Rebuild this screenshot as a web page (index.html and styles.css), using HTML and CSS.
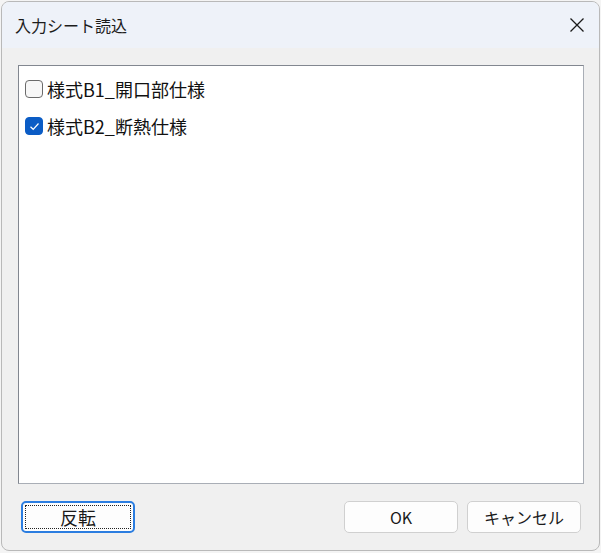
FILE: index.html
```html
<!DOCTYPE html>
<html lang="ja">
<head>
    <meta charset="UTF-8">
    <title>入力シート読込</title>
    <link rel="stylesheet" href="styles.css">
</head>
<body>
    <div class="window">
        <div class="titlebar">
            <span class="title">入力シート読込</span>
            <button class="close" aria-label="閉じる">
                <svg width="16" height="16" viewBox="0 0 16 16">
                    <path d="M1.5 1.5 L14.5 14.5 M14.5 1.5 L1.5 14.5" stroke="#1a1a1a" stroke-width="1.3" fill="none"/>
                </svg>
            </button>
        </div>
        <div class="content">
            <div class="listbox">
                <label class="item">
                    <span class="check"></span>
                    <span class="label">様式B1_開口部仕様</span>
                </label>
                <label class="item">
                    <span class="check checked">
                        <svg width="11" height="9" viewBox="0 0 11 9">
                            <path d="M1.5 4.8 L4.2 7.3 L9.5 1.5" stroke="#fff" stroke-width="1.2" fill="none"/>
                        </svg>
                    </span>
                    <span class="label">様式B2_断熱仕様</span>
                </label>
            </div>
            <div class="buttons">
                <button class="btn focused"><span class="focus-ring">反転</span></button>
                <div class="spacer"></div>
                <button class="btn">OK</button>
                <button class="btn">キャンセル</button>
            </div>
        </div>
    </div>
</body>
</html>
```

FILE: styles.css
```css
* {
    box-sizing: border-box;
    margin: 0;
    padding: 0;
}

body {
    width: 601px;
    height: 553px;
    background: #f4f4f4;
    font-family: "Noto Sans CJK JP", "Liberation Sans", sans-serif;
    padding: 1px 1px 2px 1px;
}

.window {
    height: 550px;
    display: flex;
    flex-direction: column;
    border: 1px solid #b9b9b9;
    border-radius: 8px;
    background: #f0f0f0;
    overflow: hidden;
}

.titlebar {
    height: 46px;
    flex-shrink: 0;
    display: flex;
    align-items: center;
    justify-content: space-between;
    background: #eef2f9;
    padding: 0 14px 0 13px;
}

.title {
    font-size: 16px;
    color: #1c1c1c;
}

.close {
    border: none;
    background: none;
    width: 16px;
    height: 16px;
    display: flex;
}

.content {
    flex: 1;
    display: flex;
    flex-direction: column;
    padding: 17px 15px 0 16px;
}

.listbox {
    height: 419px;
    background: #fff;
    border: 1px solid #828790;
    border-right-color: #a9aeb6;
    border-bottom-color: #a9aeb6;
    padding: 14px 0 0 6px;
    display: flex;
    flex-direction: column;
    gap: 19px;
}

.item {
    display: flex;
    align-items: center;
    gap: 4px;
    height: 18px;
}

.check {
    width: 18px;
    height: 18px;
    border: 1px solid #6b6b6b;
    border-radius: 4px;
    background: #f7f7f7;
    display: flex;
    align-items: center;
    justify-content: center;
}

.check.checked {
    background: #0b5cc5;
    border-color: #0b5cc5;
}

.label {
    font-size: 18px;
    color: #111;
}

.buttons {
    display: flex;
    margin-top: 17px;
    padding: 0 3px 0 3px;
    gap: 9px;
}

.spacer {
    flex: 1;
}

.btn {
    width: 114px;
    height: 32px;
    background: #fdfdfd;
    border: 1px solid #d0d0d0;
    border-radius: 5px;
    font-family: "Noto Sans CJK JP", "Liberation Sans", sans-serif;
    font-size: 16px;
    color: #1a1a1a;
}

.btn.focused {
    border: 2px solid #2b7de0;
    padding: 2px;
    display: flex;
}

.focus-ring {
    flex: 1;
    border: 1px dotted #222;
    display: flex;
    align-items: center;
    justify-content: center;
    font-size: 18px;
}
```
